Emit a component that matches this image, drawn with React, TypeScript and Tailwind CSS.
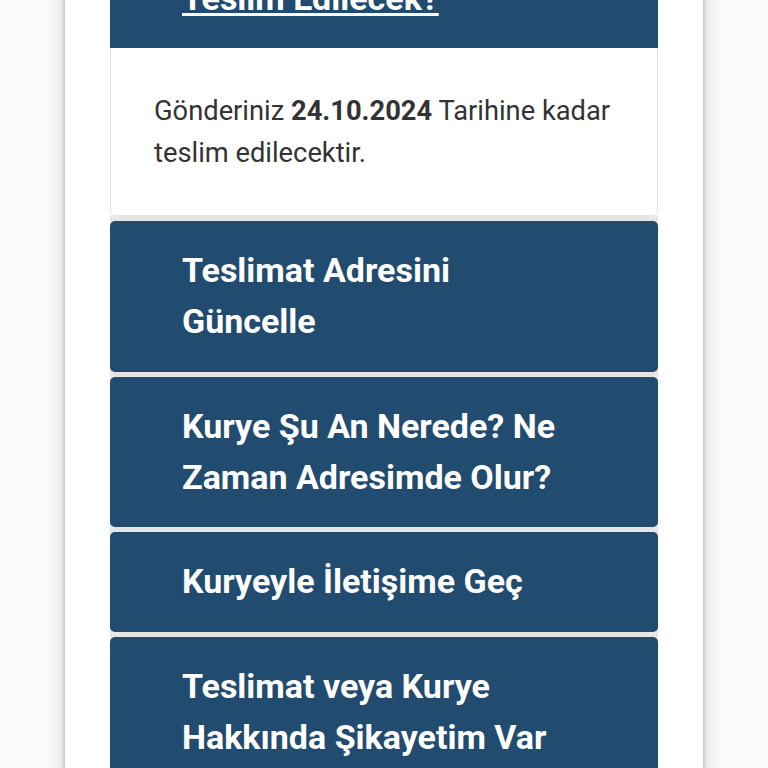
import React from "react";

const items = [
  "Teslimat Adresini Güncelle",
  "Kurye Şu An Nerede? Ne Zaman Adresimde Olur?",
  "Kuryeyle İletişime Geç",
  "Teslimat veya Kurye Hakkında Şikayetim Var",
];

export default function App() {
  return (
    <div
      className="w-[768px] h-[768px] overflow-hidden bg-[#fbfbfb]"
      style={{ fontFamily: "Roboto, 'Noto Sans', sans-serif" }}
    >
      <div className="mx-auto w-[638px] min-h-[768px] bg-white px-[45px] shadow-[0_0_6px_rgba(0,0,0,0.3),0_0_26px_rgba(0,0,0,0.12)]">
        <div className="-mt-[102px] flex flex-col gap-[5px] bg-[#e6e6e6]">
          <div className="bg-white">
            <div className="rounded-t-[5px] bg-[#224b70] px-[72px] py-[24px]">
              <a className="text-[34px] leading-[51px] font-bold text-white underline decoration-[3px] underline-offset-[3px]">
                Gönderim Ne Zaman Teslim Edilecek?
              </a>
            </div>
            <div className="rounded-b-[5px] border-x border-b border-[#e2e2e2] bg-white pt-[42px] pb-[41px] pl-[43px] pr-[30px] text-[27.3px] leading-[42px] text-[#333]">
              Gönderiniz <b className="font-bold">24.10.2024</b> Tarihine kadar teslim edilecektir.
            </div>
          </div>
          {items.map((t) => (
            <div
              key={t}
              className="rounded-[5px] bg-[#224b70] px-[72px] pt-[24px] pb-[24.5px] text-[34px] leading-[51px] font-bold text-white"
            >
              {t}
            </div>
          ))}
        </div>
      </div>
    </div>
  );
}
